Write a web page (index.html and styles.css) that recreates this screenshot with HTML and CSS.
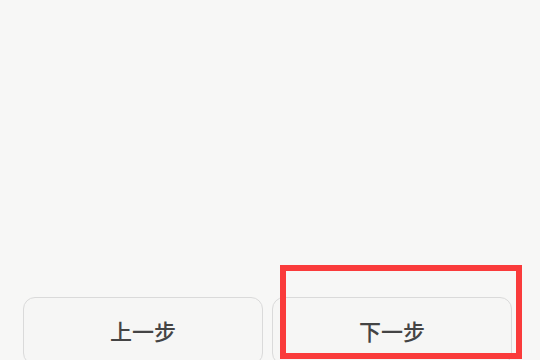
FILE: index.html
```html
<!DOCTYPE html>
<html lang="zh-CN">
<head>
    <meta charset="UTF-8">
    <meta name="viewport" content="width=device-width, initial-scale=1.0">
    <title>步骤</title>
    <link rel="stylesheet" href="styles.css">
</head>
<body>
    <div class="content"></div>

    <div class="step-bar">
        <button class="step-btn">上一步</button>
        <button class="step-btn">下一步</button>
    </div>

    <div class="highlight"></div>
</body>
</html>
```

FILE: styles.css
```css
html, body {
    margin: 0;
    height: 360px;
    overflow: hidden;
}

body {
    position: relative;
    background-color: #f7f7f6;
    font-family: "Noto Sans CJK SC", "Noto Sans", sans-serif;
}

.content {
    height: 297px;
}

.step-bar {
    display: flex;
    gap: 9px;
    padding: 0 28px 0 23px;
}

.step-btn {
    flex: 1;
    height: 68px;
    padding: 0 0 2px;
    border: 1px solid #dadada;
    border-radius: 12px;
    background: #f6f6f5;
    color: #444;
    font-family: inherit;
    font-size: 22px;
    font-weight: 500;
    line-height: 1;
}

.highlight {
    position: absolute;
    left: 280px;
    top: 265px;
    width: 230px;
    height: 82px;
    border: 6px solid #fa3b3b;
}
```
